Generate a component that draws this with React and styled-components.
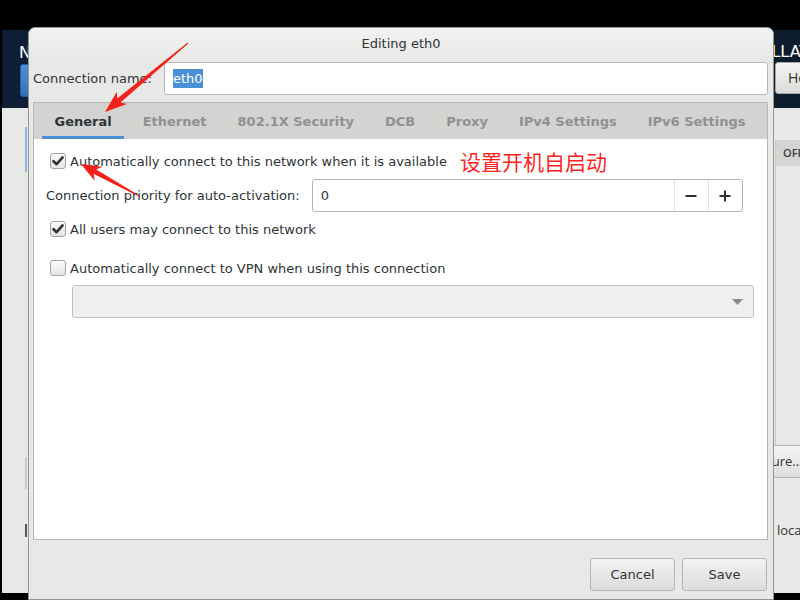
import React from "react"
import styled, { createGlobalStyle } from "styled-components"

const GlobalStyle = createGlobalStyle`
  html, body {
    margin: 0;
    padding: 0;
    background: #000;
  }
  body {
    font-family: "DejaVu Sans", "Noto Sans CJK SC", sans-serif;
    font-size: 13px;
    color: #2e3436;
  }
`

const Screen = styled.div`
  position: relative;
  width: 800px;
  height: 600px;
  overflow: hidden;
  background: #000;
`

/* installer window sitting behind the dialog */
const BackWindow = styled.div`
  position: absolute;
  left: 2px;
  top: 30px;
  width: 1000px;
  height: 563px;
  background: #e8e8e7;
  display: flex;
  flex-direction: column;
`

const BackHeader = styled.div`
  height: 78px;
  display: flex;
  background: linear-gradient(to right, #0f1d38, #0b1c27);
  color: #fff;
`

const HeaderLeft = styled.div`
  width: 771px;
  padding: 13px 0 0 17px;
  box-sizing: border-box;
  display: flex;
  flex-direction: column;
`

const HeaderTitle = styled.div`
  font-size: 16px;
  line-height: 20px;
  white-space: nowrap;
  margin-left: ${p => p.$shift || 0}px;
`

const DoneButton = styled.div`
  margin: 1px 0 0 1px;
  width: 70px;
  height: 31px;
  border-radius: 3px;
  background: linear-gradient(#4d8fd6, #3272bd);
  border: 1px solid #2a5f9e;
`

const HeaderRight = styled.div`
  flex: 1;
  padding-top: 12px;
  display: flex;
  flex-direction: column;
`

const HelpButton = styled.div`
  margin: 0 0 0 2px;
  width: 70px;
  height: 32px;
  box-sizing: border-box;
  border: 1px solid #a8a8a6;
  border-radius: 3px;
  background: linear-gradient(#f4f4f3, #dcdcda);
  color: #2e3436;
  font-family: "Open Sans", sans-serif;
  font-size: 14px;
  line-height: 30px;
  padding-left: 12px;
`

const BackBody = styled.div`
  flex: 1;
  display: flex;
  font-family: "Open Sans", sans-serif;
`

const LeftPane = styled.div`
  width: 771px;
  padding-left: 23px;
  box-sizing: border-box;
`

const EdgeTrack = styled.div`
  width: 2px;
  display: flex;
  flex-direction: column;
`

const EdgeMark = styled.div`
  width: 2px;
  height: ${p => p.$h}px;
  margin-top: ${p => p.$top}px;
  background: ${p => p.$color};
`

const RightPane = styled.div`
  flex: 1;
  padding-top: 32px;
  display: flex;
  flex-direction: column;
`

const ListBox = styled.div`
  height: 305px;
  border-left: 1px solid #c4c4c2;
  margin-left: 2px;
  display: flex;
  flex-direction: column;
`

const ListHead = styled.div`
  height: 26px;
  background: #d4d4d3;
  font-size: 11px;
  font-weight: 600;
  line-height: 26px;
  padding-left: 7px;
  color: #3a3e40;
`

const ConfigureButton = styled.div`
  width: 110px;
  height: 33px;
  margin-left: -55px;
  box-sizing: border-box;
  border: 1px solid #b6b6b3;
  border-radius: 3px;
  background: linear-gradient(#f4f4f3, #dedede);
  font-size: 13px;
  line-height: 31px;
  padding-left: 14px;
`

const HostText = styled.div`
  margin: 43px 0 0 4px;
  font-size: 13px;
`

/* the dialog */
const Dialog = styled.div`
  position: absolute;
  left: 28px;
  top: 27px;
  width: 746px;
  height: 573px;
  box-sizing: border-box;
  border: 1px solid #959595;
  border-radius: 7px 7px 0 0;
  background: #e8e8e7;
  display: flex;
  flex-direction: column;
  z-index: 2;
`

const TitleBar = styled.div`
  height: 32px;
  line-height: 32px;
  text-align: center;
  font-size: 13px;
  border-radius: 7px 7px 0 0;
  background: linear-gradient(#f3f3f2, #e8e8e7);
`

const NameRow = styled.div`
  margin-top: 2px;
  padding: 0 5px 0 4px;
  display: flex;
  align-items: center;
`

const FieldLabel = styled.span`
  white-space: nowrap;
  margin-right: ${p => p.$gap || 0}px;
`

const TextField = styled.div`
  flex: 1;
  height: 33px;
  box-sizing: border-box;
  border: 1px solid #b6b6b3;
  border-radius: 3px;
  background: #fff;
  display: flex;
  align-items: center;
  padding-left: 8px;
`

const Selected = styled.span`
  background: #4a90d9;
  color: #fff;
  line-height: 19px;
`

const Notebook = styled.div`
  flex: 1;
  margin: 7px 5px 0 4px;
  border: 1px solid #b6b6b3;
  display: flex;
  flex-direction: column;
`

const TabBar = styled.div`
  height: 36px;
  background: #d3d3d2;
  display: flex;
  padding-left: 5px;
`

const Tab = styled.div`
  padding: 0 12.5px;
  margin: 0 3px;
  display: flex;
  align-items: center;
  font-weight: bold;
  font-size: 13px;
  white-space: nowrap;
  color: ${p => (p.$active ? "#2e3436" : "#8f9191")};
  box-shadow: ${p => (p.$active ? "inset 0 -3px 0 #4a90d9" : "none")};
`

const Page = styled.div`
  flex: 1;
  background: #fff;
  padding: 14px 12px 0 12px;
  display: flex;
  flex-direction: column;
`

const CheckRow = styled.div`
  display: flex;
  align-items: center;
  height: 16px;
  margin: ${p => p.$top || 0}px 0 0 4px;
  white-space: nowrap;
`

const Box = styled.div`
  width: 16px;
  height: 16px;
  box-sizing: border-box;
  border: 1px solid #a3a3a1;
  border-radius: 3px;
  background: linear-gradient(#fcfcfc, #e4e4e3);
  margin-right: 4px;
  display: flex;
  align-items: center;
  justify-content: center;
  flex: none;
`

const Annotation = styled.span`
  margin-left: 13px;
  font-family: "Noto Sans CJK SC", sans-serif;
  font-size: 21px;
  line-height: 16px;
  color: #ff1f1f;
`

const SpinRow = styled.div`
  display: flex;
  align-items: center;
  margin-top: 10px;
`

const Spin = styled.div`
  width: 431px;
  height: 33px;
  box-sizing: border-box;
  border: 1px solid #b6b6b3;
  border-radius: 3px;
  background: #fff;
  display: flex;
`

const SpinValue = styled.div`
  flex: 1;
  padding-left: 8px;
  line-height: 31px;
`

const SpinButton = styled.div`
  width: 33px;
  border-left: 1px solid #e2e2e1;
  display: flex;
  align-items: center;
  justify-content: center;
`

const Combo = styled.div`
  width: 682px;
  height: 33px;
  box-sizing: border-box;
  margin: 9px 0 0 26px;
  border: 1px solid #c2c2bf;
  border-radius: 3px;
  background: #efefee;
  display: flex;
  align-items: center;
  justify-content: flex-end;
  padding-right: 10px;
`

const Footer = styled.div`
  height: 59px;
  box-sizing: border-box;
  padding: 18px 6px 0 0;
  display: flex;
  justify-content: flex-end;
  gap: 7px;
`

const Button = styled.div`
  width: 85px;
  height: 33px;
  box-sizing: border-box;
  border: 1px solid #b6b6b3;
  border-radius: 3px;
  background: linear-gradient(#f2f2f1, #dcdcdb);
  text-align: center;
  line-height: 31px;
  font-size: 13px;
`

const Overlay = styled.svg`
  position: absolute;
  left: 0;
  top: 0;
  z-index: 3;
  pointer-events: none;
`

const arrowPoints = (tx, ty, px, py, headLen, headHalf, w0, w1) => {
  const dx = px - tx
  const dy = py - ty
  const len = Math.hypot(dx, dy)
  const ux = dx / len
  const uy = dy / len
  const nx = -uy
  const ny = ux
  const bx = px - ux * headLen
  const by = py - uy * headLen
  const pts = [
    [tx + nx * w0 / 2, ty + ny * w0 / 2],
    [bx + nx * w1 / 2 + ux * 2, by + ny * w1 / 2 + uy * 2],
    [bx + nx * headHalf - ux * 2, by + ny * headHalf - uy * 2],
    [px, py],
    [bx - nx * headHalf - ux * 2, by - ny * headHalf - uy * 2],
    [bx - nx * w1 / 2 + ux * 2, by - ny * w1 / 2 + uy * 2],
    [tx - nx * w0 / 2, ty - ny * w0 / 2],
  ]
  return pts.map(p => p.map(v => v.toFixed(1)).join(",")).join(" ")
}

const Check = () => (
  <svg width="12" height="12" viewBox="0 0 12 12">
    <path d="M1.5 6.2 L4.6 9.2 L10.6 2.4" fill="none" stroke="#2e3436" strokeWidth="2.6" strokeLinecap="round" strokeLinejoin="round" />
  </svg>
)

const Checkbox = ({ checked }) => <Box>{checked && <Check />}</Box>

const tabs = ["General", "Ethernet", "802.1X Security", "DCB", "Proxy", "IPv4 Settings", "IPv6 Settings"]

export default function App() {
  return (
    <Screen>
      <GlobalStyle />
      <BackWindow>
        <BackHeader>
          <HeaderLeft>
            <HeaderTitle>NETWORK &amp; HOST NAME</HeaderTitle>
            <DoneButton />
          </HeaderLeft>
          <HeaderRight>
            <HeaderTitle $shift={-134}>CENTOS 7 INSTALLATION</HeaderTitle>
            <HelpButton>Help!</HelpButton>
          </HeaderRight>
        </BackHeader>
        <BackBody>
          <LeftPane>
            <EdgeTrack>
              <EdgeMark $top={19} $h={45} $color="#8fb6e3" />
              <EdgeMark $top={285} $h={32} $color="#c8c8c6" />
              <EdgeMark $top={35} $h={13} $color="#555" />
            </EdgeTrack>
          </LeftPane>
          <RightPane>
            <ListBox>
              <ListHead>OFF</ListHead>
            </ListBox>
            <ConfigureButton>Configure...</ConfigureButton>
            <HostText>localhost</HostText>
          </RightPane>
        </BackBody>
      </BackWindow>

      <Dialog>
        <TitleBar>Editing eth0</TitleBar>
        <NameRow>
          <FieldLabel $gap={12}>Connection name:</FieldLabel>
          <TextField>
            <Selected>eth0</Selected>
          </TextField>
        </NameRow>
        <Notebook>
          <TabBar>
            {tabs.map((t, i) => (
              <Tab key={t} $active={i === 0}>{t}</Tab>
            ))}
          </TabBar>
          <Page>
            <CheckRow>
              <Checkbox checked />
              Automatically connect to this network when it is available
              <Annotation>设置开机自启动</Annotation>
            </CheckRow>
            <SpinRow>
              <FieldLabel $gap={12}>Connection priority for auto-activation:</FieldLabel>
              <Spin>
                <SpinValue>0</SpinValue>
                <SpinButton>
                  <svg width="12" height="12" viewBox="0 0 12 12">
                    <path d="M0.5 6 H11.5" stroke="#2e3436" strokeWidth="2" />
                  </svg>
                </SpinButton>
                <SpinButton>
                  <svg width="12" height="12" viewBox="0 0 12 12">
                    <path d="M0.5 6 H11.5 M6 0.5 V11.5" stroke="#2e3436" strokeWidth="2" />
                  </svg>
                </SpinButton>
              </Spin>
            </SpinRow>
            <CheckRow $top={9}>
              <Checkbox checked />
              All users may connect to this network
            </CheckRow>
            <CheckRow $top={23}>
              <Checkbox />
              Automatically connect to VPN when using this connection
            </CheckRow>
            <Combo>
              <svg width="11" height="6" viewBox="0 0 11 6">
                <path d="M0 0 H11 L5.5 6 Z" fill="#8a8a89" />
              </svg>
            </Combo>
          </Page>
        </Notebook>
        <Footer>
          <Button>Cancel</Button>
          <Button>Save</Button>
        </Footer>
      </Dialog>

      <Overlay width="800" height="600" viewBox="0 0 800 600">
        <polygon points={arrowPoints(188, 43, 105, 112, 20, 8, 1, 5)} fill="#f5221b" />
        <polygon points={arrowPoints(139, 196, 81, 164, 18, 8, 1, 5)} fill="#f5221b" />
      </Overlay>
    </Screen>
  )
}
